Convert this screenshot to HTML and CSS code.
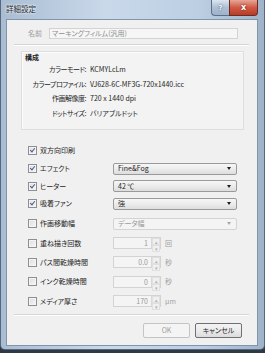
FILE: index.html
```html
<!DOCTYPE html>
<html lang="ja">
<head>
  <meta charset="UTF-8" />
  <title>詳細設定</title>
  <link rel="stylesheet" href="styles.css">
</head>
<body>
  <div class="window">
    <div class="titlebar">
      <span class="title">詳細設定</span>
      <span class="help">?</span>
      <span class="close">x</span>
    </div>

    <div class="client">
      <div class="name-row">
        <span class="name-label">名前</span>
        <div class="name-input">マーキングフィルム(汎用)</div>
      </div>
      <div class="rule top-rule"></div>

      <div class="group">
        <div class="group-title">構成</div>
        <div class="info-row"><span class="info-key">カラーモード:</span><span>KCMYLcLm</span></div>
        <div class="info-row"><span class="info-key">カラープロファイル:</span><span>VJ628-6C-MF3G-720x1440.icc</span></div>
        <div class="info-row"><span class="info-key">作画解像度:</span><span>720 x 1440 dpi</span></div>
        <div class="info-row"><span class="info-key">ドットサイズ:</span><span>バリアブルドット</span></div>
      </div>

      <div class="options">
        <div class="opt short">
          <span class="check on"></span><span class="opt-label">双方向印刷</span>
        </div>
        <div class="opt short">
          <span class="check on"></span><span class="opt-label">エフェクト</span>
          <div class="combo"><span>Fine&amp;Fog</span><span class="arrow"></span></div>
        </div>
        <div class="opt short">
          <span class="check on"></span><span class="opt-label">ヒーター</span>
          <div class="combo"><span>42 ℃</span><span class="arrow"></span></div>
        </div>
        <div class="opt short">
          <span class="check on"></span><span class="opt-label">吸着ファン</span>
          <div class="combo"><span>強</span><span class="arrow"></span></div>
        </div>
        <div class="opt tall">
          <span class="check"></span><span class="opt-label">作画移動幅</span>
          <div class="combo off"><span>データ幅</span><span class="arrow"></span></div>
        </div>
        <div class="opt tall">
          <span class="check"></span><span class="opt-label">重ね描き回数</span>
          <div class="spin"><span class="spin-val">1</span><span class="spin-btns"><i>▴</i><i>▾</i></span></div>
          <span class="unit">回</span>
        </div>
        <div class="opt tall">
          <span class="check"></span><span class="opt-label">パス間乾燥時間</span>
          <div class="spin"><span class="spin-val">0.0</span><span class="spin-btns"><i>▴</i><i>▾</i></span></div>
          <span class="unit">秒</span>
        </div>
        <div class="opt tall">
          <span class="check"></span><span class="opt-label">インク乾燥時間</span>
          <div class="spin"><span class="spin-val">0</span><span class="spin-btns"><i>▴</i><i>▾</i></span></div>
          <span class="unit">秒</span>
        </div>
        <div class="opt tall">
          <span class="check"></span><span class="opt-label">メディア厚さ</span>
          <div class="spin"><span class="spin-val">170</span><span class="spin-btns"><i>▴</i><i>▾</i></span></div>
          <span class="unit">μm</span>
        </div>
      </div>

      <div class="rule bottom-rule"></div>
      <div class="buttons">
        <button class="btn off">OK</button>
        <button class="btn">キャンセル</button>
      </div>
    </div>
  </div>
</body>
</html>
```

FILE: styles.css
```css
* {
  margin: 0;
  padding: 0;
  box-sizing: border-box;
}

html, body {
  width: 265px;
  height: 353px;
}

body {
  background: #2f3946;
  font-family: "Noto Sans CJK JP", "Noto Sans", sans-serif;
  font-feature-settings: "palt";
  font-size: 7px;
  color: #1e1e1e;
  overflow: hidden;
}

.window {
  height: 350px;
  display: flex;
  flex-direction: column;
  padding: 0 6px 3px 5px;
  background: linear-gradient(90deg, #a9bdd2 0%, #c9d9ea 40%, #bccfe3 75%, #9fb3c9 100%);
  border: 1px solid #55687f;
  border-top: none;
  border-radius: 0 0 5px 5px;
}

.titlebar {
  height: 19px;
  display: flex;
  align-items: flex-start;
}

.title {
  flex: 1;
  padding: 4px 0 0 0;
  font-size: 7.5px;
  line-height: 9px;
  color: #1a2635;
  text-shadow: 0 0 3px #fff, 0 0 2px #fff;
}

.help, .close {
  height: 16px;
  display: flex;
  align-items: center;
  justify-content: center;
  font-family: "DejaVu Sans", sans-serif;
  font-weight: bold;
  color: #fff;
  border: 1px solid #5b6f88;
  border-top: none;
}

.help {
  width: 18px;
  font-size: 7px;
  background: linear-gradient(#dbe6f1, #aebfd3 50%, #9fb2c8);
  border-radius: 0 0 0 4px;
  border-right: none;
  color: #f6f8fb;
  text-shadow: 0 0 2px #33475f;
}

.close {
  width: 29px;
  font-size: 8px;
  background: linear-gradient(#e8a596, #cf5a44 50%, #b83a26);
  border-radius: 0 0 4px 0;
  border-color: #6d2a22;
  text-shadow: 0 0 2px #5a1a10;
}

.client {
  flex: 1;
  background: #f0f0f0;
  border: 1px solid #8194aa;
  padding: 0 8px 0 7px;
  display: flex;
  flex-direction: column;
}

.name-row {
  display: flex;
  align-items: center;
  margin-top: 8px;
  height: 11px;
}

.name-label {
  width: 35px;
  padding-right: 7px;
  text-align: right;
  color: #9a9a9a;
  line-height: 9px;
}

.name-input {
  width: 189px;
  height: 11px;
  border: 1px solid #d3d3d3;
  background: #f6f6f6;
  color: #8d8d8d;
  line-height: 9px;
  padding-left: 2px;
  white-space: nowrap;
}

.rule {
  height: 2px;
  border-top: 1px solid #d5d5d5;
  border-bottom: 1px solid #fff;
}

.top-rule {
  margin-top: 5px;
}

.group {
  margin: 5px 5px 0 7px;
  height: 79px;
  border: 1px solid #dedede;
  background: #f3f3f3;
  box-shadow: inset 1px 1px 0 #fbfbfb;
  padding: 1px 0 0 3px;
}

.group-title {
  line-height: 9px;
  color: #1e1e1e;
  font-weight: bold;
}

.info-row {
  display: flex;
  height: 14.7px;
  align-items: center;
  line-height: 9px;
  white-space: nowrap;
}

.info-key {
  width: 65px;
  padding-right: 4px;
  text-align: right;
  letter-spacing: -0.5px;
}

.options {
  margin: 12px 0 0 14px;
  display: flex;
  flex-direction: column;
}

.opt {
  display: flex;
  align-items: center;
  line-height: 9px;
}

.opt.short {
  height: 17.7px;
}

.opt.tall {
  height: 19.4px;
}

.opt.short + .opt.tall {
  margin-top: 1.2px;
}

.check {
  width: 9px;
  height: 9px;
  border: 1px solid #8e8f8f;
  background: linear-gradient(135deg, #dcdcdc, #f8f8f8);
  box-shadow: inset 0 0 0 1px #f4f4f4;
  margin-right: 3px;
  position: relative;
}

.check.on::after {
  content: "";
  position: absolute;
  left: 2px;
  top: 0px;
  width: 2px;
  height: 4px;
  border-right: 1.5px solid #4a5c96;
  border-bottom: 1.5px solid #4a5c96;
  transform: rotate(40deg);
}

.opt-label {
  width: 73px;
  white-space: nowrap;
}

.combo {
  width: 124px;
  height: 12px;
  display: flex;
  align-items: center;
  justify-content: space-between;
  padding: 0 5px 0 4px;
  border: 1px solid #9a9a9a;
  border-radius: 2px;
  background: linear-gradient(#f6f6f6, #ececec 50%, #dddddd);
}

.arrow {
  width: 0;
  height: 0;
  border-left: 2.5px solid transparent;
  border-right: 2.5px solid transparent;
  border-top: 3px solid #1e1e1e;
}

.combo.off {
  border-color: #d3d3d3;
  background: #f4f4f4;
  color: #9a9a9a;
}

.combo.off .arrow {
  border-top-color: #a8a8a8;
}

.spin {
  width: 48px;
  height: 12px;
  display: flex;
  border: 1px solid #d3d3d3;
  background: #f4f4f4;
  color: #9a9a9a;
}

.spin-val {
  flex: 1;
  text-align: right;
  padding-right: 3px;
  line-height: 10px;
}

.spin-btns {
  width: 9px;
  display: flex;
  flex-direction: column;
  border-left: 1px solid #d8d8d8;
}

.spin-btns i {
  flex: 1;
  font-style: normal;
  font-size: 5px;
  line-height: 5px;
  text-align: center;
  color: #b0b0b0;
  border: 1px solid #e0e0e0;
  background: #f0f0f0;
}

.unit {
  margin-left: 4px;
  color: #a0a0a0;
}

.bottom-rule {
  margin-top: auto;
  margin-bottom: 7px;
}

.buttons {
  display: flex;
  justify-content: flex-end;
  gap: 5px;
  padding-right: 7px;
  margin-bottom: 7px;
}

.btn {
  width: 47px;
  height: 15px;
  font-family: inherit;
  font-feature-settings: "palt";
  font-size: 7px;
  line-height: 9px;
  color: #1e1e1e;
  border: 1px solid #707070;
  border-radius: 2px;
  background: linear-gradient(#f3f3f3, #ebebeb 50%, #dcdcdc);
}

.btn.off {
  color: #a0a0a0;
  border-color: #c4c4c4;
  background: #f4f4f4;
}
```
